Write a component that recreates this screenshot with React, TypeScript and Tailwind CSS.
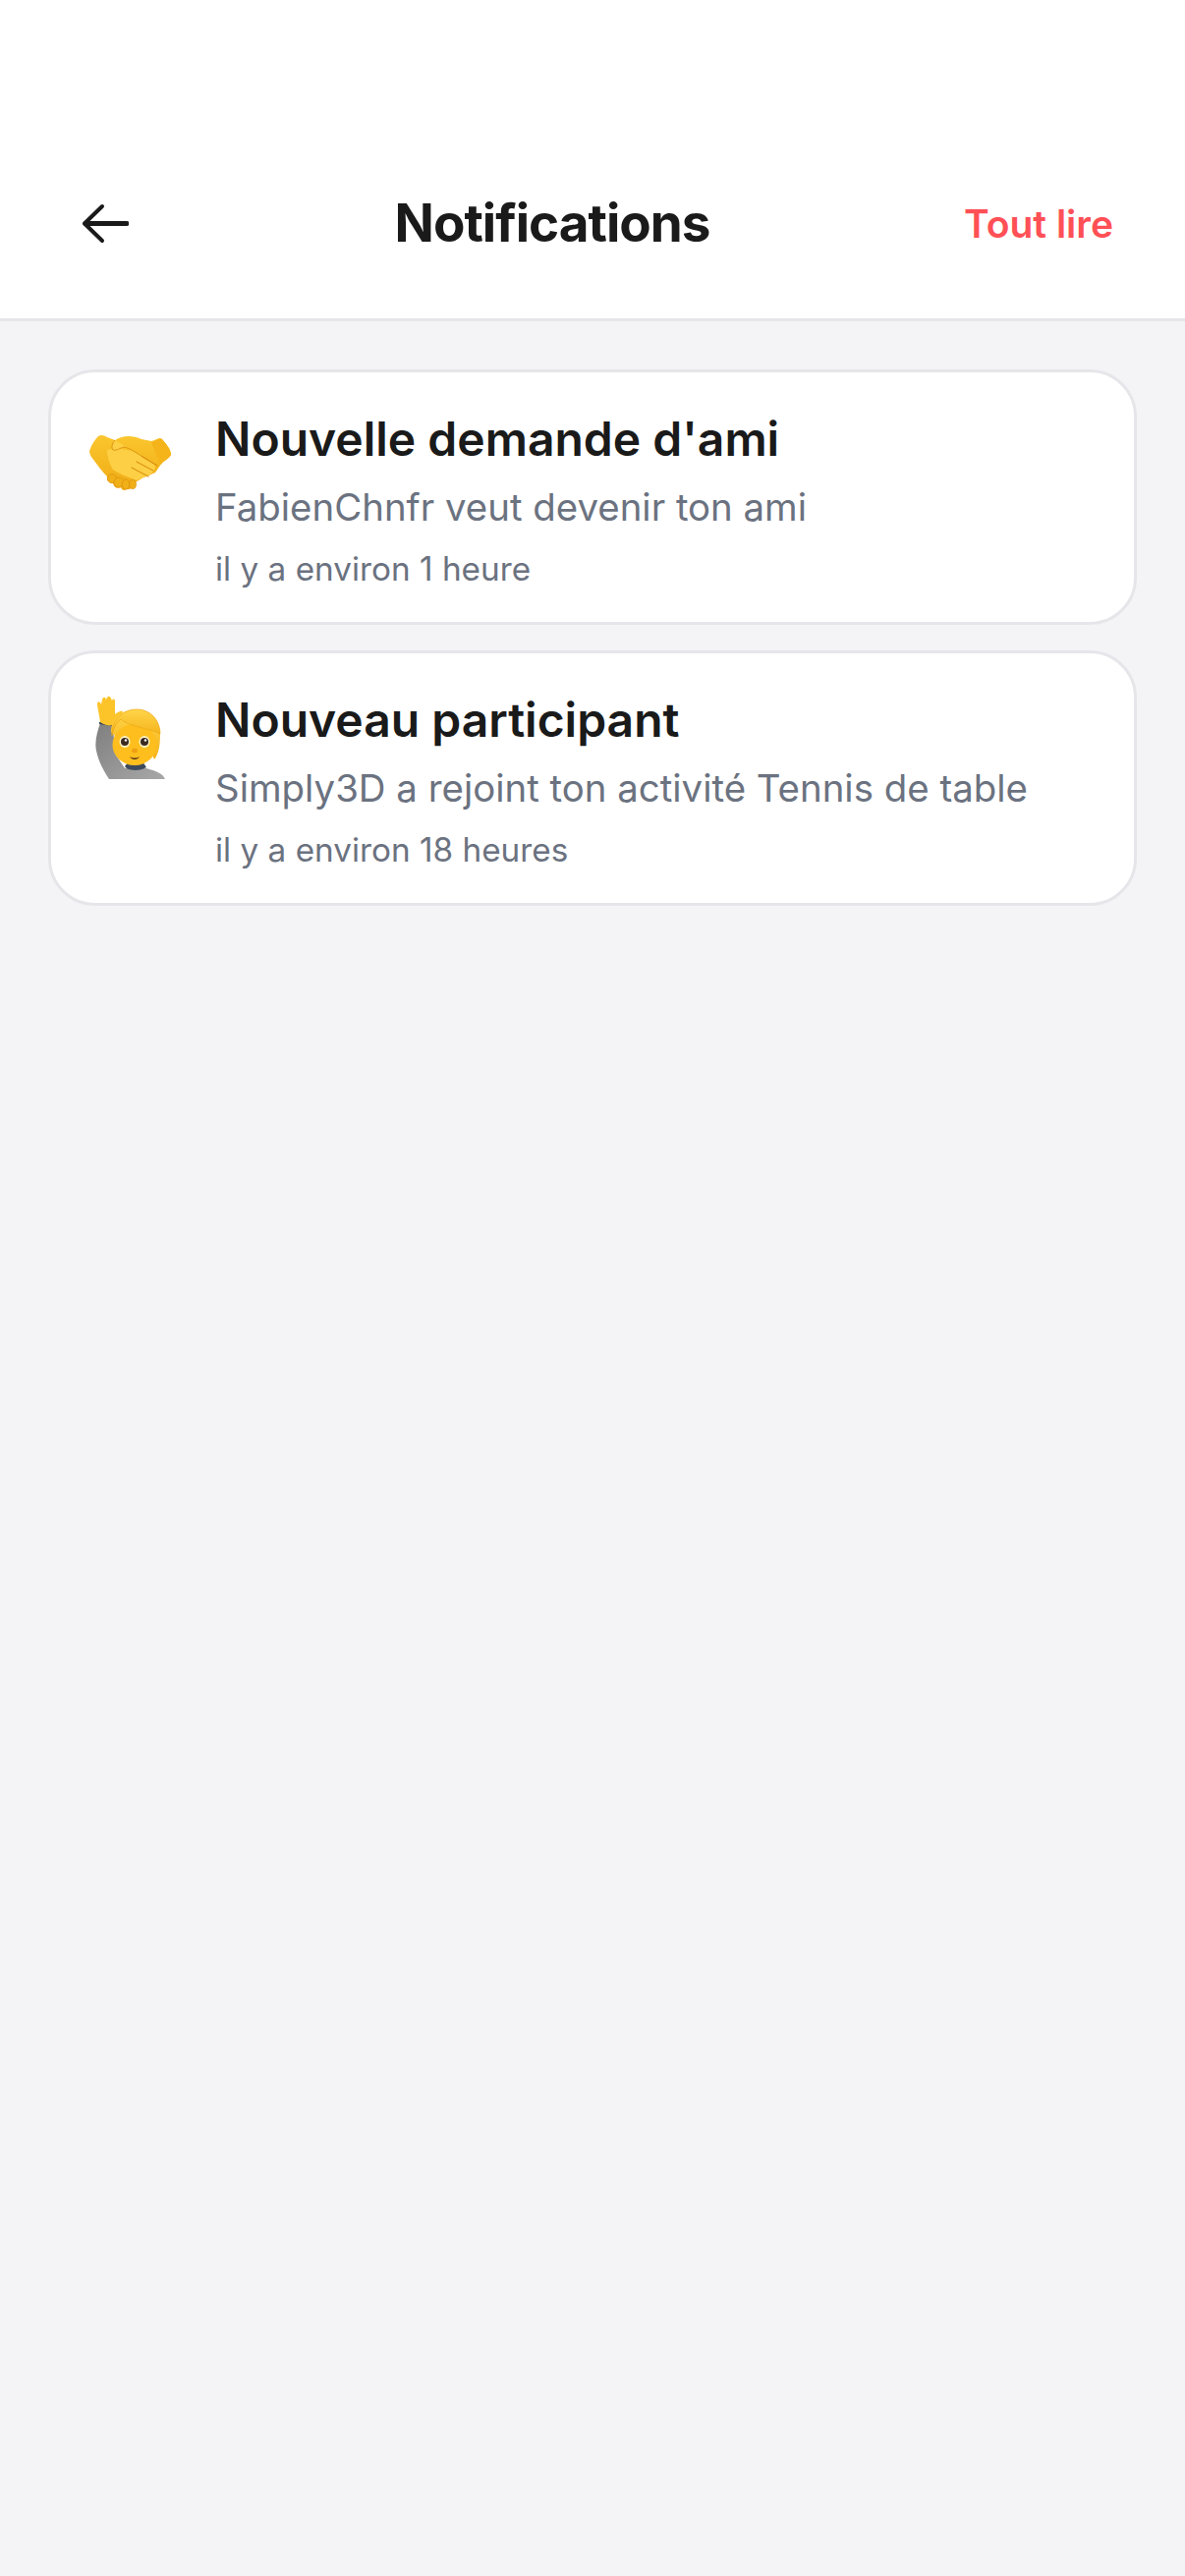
const FONT = "font-['Inter','Liberation_Sans',sans-serif]";

function BackArrow() {
  return (
    <svg viewBox="0 0 48 41" className="h-[41px] w-[48px]" fill="none" stroke="#1a1a1a" strokeLinecap="round" strokeLinejoin="round">
      <path d="M46 20.5 H4" strokeWidth="5" />
      <path d="M21 3 L3 20.5 L21 38" strokeWidth="4" />
    </svg>
  );
}

// Drawn by hand since there is no colour emoji font to rely on.
function HandshakeEmoji() {
  return (
    <svg viewBox="0 0 84 58" className="h-[58px] w-[84px]">
      <defs>
        <linearGradient id="shake" x1="0" y1="0" x2="0" y2="1">
          <stop offset="0" stopColor="#fbc62e" />
          <stop offset="1" stopColor="#efaa14" />
        </linearGradient>
      </defs>
      <path
        d="M9 2 C12 0 15 1 18 3 L26 6 C34 1 44 1 53 5 L63 7 C68 6 71 2 74 5 C78 10 83 15 83 21 C82 24 78 26 74 29 L67 39 C62 41 59 43 55 44 L45 50 C44 55 41 57 38 56 C35 58 33 57 32 54 C28 56 25 54 24 50 C20 50 17 47 18 43 C13 38 8 31 5 27 C2 24 0 20 0 17 C2 11 5 6 9 2 Z"
        fill="url(#shake)"
      />
      <path
        d="M18 16 L26 14 C32 16 40 15 46 18 L66 30 C68 34 66 38 62 41 L48 47 C40 44 30 40 24 36 C20 30 18 22 18 16 Z"
        fill="#fdcf45"
      />
      <path
        d="M26 6 C23 9 22 14 24 16 C28 17 31 14 35 13 C42 14 50 21 58 25 L69 32"
        fill="#fdcf45"
        stroke="#dc9612"
        strokeWidth="1"
      />
      <path
        d="M43 34 L60 43 M48 28 L65 37 M54 23 L69 32"
        stroke="#dc9612"
        strokeWidth="1.2"
        strokeLinecap="round"
        fill="none"
      />
      <path d="M63 8 C68 7 71 3 74 5 C78 10 83 15 83 21 C80 25 75 27 73 31 C69 24 65 14 63 8 Z" fill="#f4b41a" />
      <g fill="#f2b018" stroke="#dc9612" strokeWidth="0.8">
        <circle cx="23" cy="45" r="4.5" />
        <circle cx="30" cy="49" r="5" />
        <ellipse cx="37" cy="51" rx="3.8" ry="5" />
        <ellipse cx="44" cy="51" rx="3.4" ry="4.5" />
      </g>
    </svg>
  );
}

function RaisedHandEmoji() {
  return (
    <svg viewBox="0 0 72 84" className="h-[84px] w-[72px]">
      <defs>
        <linearGradient id="sleeve" x1="0" y1="0" x2="1" y2="1">
          <stop offset="0" stopColor="#7f7f7f" />
          <stop offset="1" stopColor="#a8a8a8" />
        </linearGradient>
        <linearGradient id="hair" x1="0" y1="0" x2="0" y2="1">
          <stop offset="0" stopColor="#ffd54a" />
          <stop offset="1" stopColor="#f5b21a" />
        </linearGradient>
      </defs>
      {/* arm and body */}
      <path
        d="M5 27 C2 36 -1 46 1 55 C3 66 9 76 14 84 L71 84 C69 79 63 76 52 73 L30 73 L20 58 L18 30 Z"
        fill="url(#sleeve)"
      />
      <path d="M5 27 L18 29" stroke="#3d4a5c" strokeWidth="2.5" strokeLinecap="round" />
      {/* hand */}
      <path
        d="M5 26 C4 18 2 11 2 7 C3 4 5 5 6 8 L7 3 C8 0 10 0 11 3 L12 1 C13 -1 15 -1 16 2 L17 4 C18 2 20 2 20 5 L20 18 C23 16 26 14 28 15 C26 21 23 27 18 29 C14 30 9 29 5 26 Z"
        fill="#fdc42a"
      />
      {/* hair behind the face */}
      <path d="M16 36 C16 22 28 13 42 13 C56 13 66 24 66 38 C66 48 65 58 60 64 L50 40 L20 40 Z" fill="url(#hair)" />
      {/* collar */}
      <path d="M30 71 C33 76 46 76 52 72 L48 66 L34 66 Z" fill="#3d4a5c" />
      {/* face */}
      <ellipse cx="40" cy="49" rx="22.5" ry="21" fill="#fdbe1e" />
      {/* fringe */}
      <path
        d="M17 40 C18 33 21 27 26 23 C32 29 46 31 62 36 L66 38 C66 24 56 13 42 13 C28 13 16 24 17 40 Z"
        fill="url(#hair)"
        stroke="#e9a412"
        strokeWidth="0.6"
      />
      <ellipse cx="30" cy="46" rx="5.5" ry="6" fill="#fff3c4" />
      <ellipse cx="50" cy="46" rx="5.5" ry="6" fill="#fff3c4" />
      <circle cx="30" cy="46" r="4" fill="#3b2a20" />
      <circle cx="50" cy="46" r="4" fill="#3b2a20" />
      <circle cx="31" cy="44.5" r="1.2" fill="#fff" />
      <circle cx="51" cy="44.5" r="1.2" fill="#fff" />
      <ellipse cx="40" cy="55" rx="3" ry="2.2" fill="#ef9f12" />
      <path d="M35 61 C38 63 42 63 45 61 C43 65 37 65 35 61 Z" fill="#4a2a1a" />
    </svg>
  );
}

const NOTIFICATIONS = [
  {
    id: 1,
    icon: <HandshakeEmoji />,
    iconBox: "pl-[39px] pt-[63px]",
    title: "Nouvelle demande d'ami",
    body: "FabienChnfr veut devenir ton ami",
    time: "il y a environ 1 heure",
  },
  {
    id: 2,
    icon: <RaisedHandEmoji />,
    iconBox: "pl-[45px] pt-[44px]",
    title: "Nouveau participant",
    body: "Simply3D a rejoint ton activité Tennis de table",
    time: "il y a environ 18 heures",
  },
];

export default function App() {
  return (
    <div className={`flex h-[2622px] w-[1206px] flex-col overflow-hidden bg-[#f4f4f7] ${FONT}`}>
      <header className="flex h-[327px] shrink-0 items-center justify-between border-b-[3px] border-[#e6e6ea] bg-white pt-[130px] pl-[83px] pr-[73px]">
        <BackArrow />
        <h1 className="ml-[12px] text-[53px] leading-[64px] font-bold tracking-[-1px] text-[#1a1a1a]">Notifications</h1>
        <button className="mt-[2px] text-[39px] leading-[64px] font-semibold text-[#ff5056]">Tout lire</button>
      </header>

      <main className="flex flex-col gap-[26px] px-[49px] pt-[49px]">
        {NOTIFICATIONS.map((n) => (
          <div key={n.id} className="flex h-[260px] rounded-[48px] border-[3px] border-[#e6e6ea] bg-white">
            <div className={`w-[167px] shrink-0 ${n.iconBox}`}>{n.icon}</div>
            <div className="flex flex-col pt-[38px]">
              <h2 className="text-[48px] leading-[60px] font-semibold text-[#1a1a1a]">{n.title}</h2>
              <p className="mt-[15px] text-[38.4px] leading-[48px] text-[#6b7280]">{n.body}</p>
              <p className="mt-[19px] text-[33.3px] leading-[40px] text-[#6b7280]">{n.time}</p>
            </div>
          </div>
        ))}
      </main>
    </div>
  );
}
